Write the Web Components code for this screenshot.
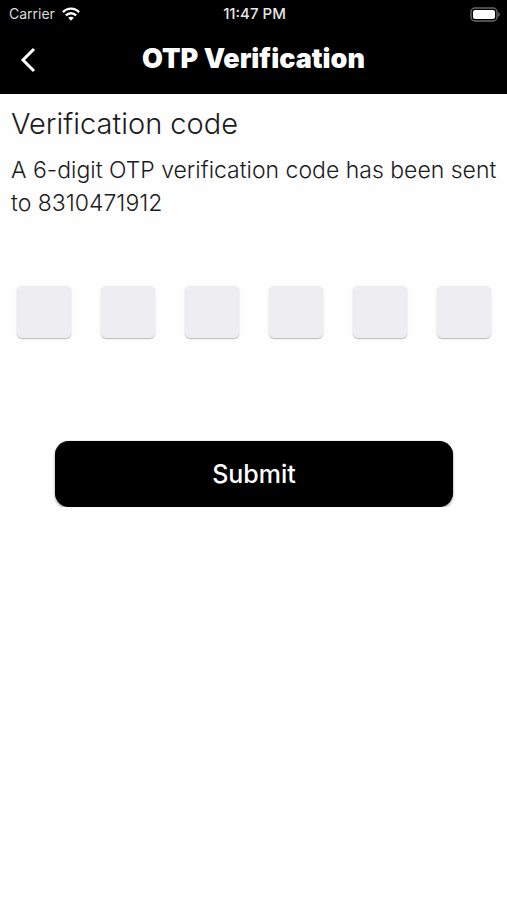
<!DOCTYPE html>
<html lang="en">
<head>
<meta charset="utf-8">
<meta name="viewport" content="width=device-width, initial-scale=1">
<title>OTP Verification</title>
<style>
  html, body { margin: 0; min-height: 100%; background: #fefefe; }
  body { font-family: Inter, "Open Sans", sans-serif; color: #1c1c1c; }
</style>
</head>
<body>
<otp-screen></otp-screen>
<script>
class StatusBar extends HTMLElement {
  constructor() {
    super();
    this.attachShadow({ mode: "open" }).innerHTML = `
      <style>
        :host { display: grid; grid-template-columns: 1fr auto 1fr; align-items: center;
          height: 28px; padding: 0 7px 0 9px; font-size: 14px; line-height: 20px; color: #dcdcdc; }
        .left { display: flex; align-items: center; gap: 7px; }
        .time { font-size: 15px; font-weight: 500; color: #e6e6e6; }
        .battery { justify-self: end; }
        svg { display: block; }
      </style>
      <div class="left"><span><slot name="carrier"></slot></span>
        <svg width="18" height="14" viewBox="0 0 18 14" fill="none" stroke="#fff" stroke-width="2.4" aria-hidden="true">
          <path d="M0.9 5.1C5.4 0.4 12.6 0.4 17.1 5.1"/>
          <path d="M3.9 8.4C6.8 5.5 11.2 5.5 14.1 8.4"/>
          <path d="M9 13.8L6.2 10.8C7.8 9.4 10.2 9.4 11.8 10.8Z" fill="#fff" stroke="none"/>
        </svg></div>
      <span class="time"><slot name="time"></slot></span>
      <svg class="battery" width="30" height="15" viewBox="0 0 30 15" aria-hidden="true">
        <rect x="1" y="1" width="26" height="13" rx="4" fill="#000" stroke="#686868" stroke-width="1.4"/>
        <rect x="3" y="3" width="22" height="9" rx="2" fill="#fff"/>
        <path d="M28.2 5.2C30.4 5.8 30.4 9.2 28.2 9.8Z" fill="#686868"/>
      </svg>`;
  }
}
class NavBar extends HTMLElement {
  constructor() {
    super();
    this.attachShadow({ mode: "open" }).innerHTML = `
      <style>
        :host { display: grid; grid-template-columns: 56px 1fr 56px; align-items: start; height: 66px; }
        button { display: grid; place-items: center; width: 56px; height: 48px; margin-top: 8px; padding: 0; border: 0; background: none; color: #fff; }
        h1 { margin: 0; padding-top: 11px; font-size: 27px; line-height: 40px; font-weight: 900; text-align: center; white-space: nowrap; color: #fff; }
        svg { display: block; }
      </style>
      <button type="button" aria-label="Back">
        <svg width="16" height="26" viewBox="0 0 16 26" fill="none" stroke="currentColor" stroke-width="3" aria-hidden="true"><path d="M14 2L3 13L14 24"/></svg>
      </button>
      <h1><slot></slot></h1>`;
  }
}
class OtpFields extends HTMLElement {
  constructor() {
    super();
    let fields = "";
    for (let i = 1; i <= 6; i++) {
      fields += `<input type="text" inputmode="numeric" maxlength="1" aria-label="Digit ${i}">`;
    }
    this.attachShadow({ mode: "open" }).innerHTML = `
      <style>
        :host { display: flex; justify-content: space-between; padding: 0 16px 0 17px; }
        input { box-sizing: border-box; width: 54px; height: 52px; padding: 0; border: 0; border-radius: 5px;
          background: #eeeef0; box-shadow: 0 1px 1px rgba(0,0,0,.22), 0 1px 3px rgba(0,0,0,.08);
          font: 500 23px Inter, sans-serif; text-align: center; color: #1c1c1c; }
      </style>${fields}`;
  }
}
class SubmitButton extends HTMLElement {
  constructor() {
    super();
    this.attachShadow({ mode: "open" }).innerHTML = `
      <style>
        :host { display: block; padding: 0 54px 0 55px; }
        button { display: block; width: 100%; height: 66px; padding: 0; border: 0; border-radius: 14px; background: #000; color: #fff;
          font: 500 25px/32px Inter, sans-serif; box-shadow: 0 0 1px rgba(0,0,0,.5), 0 2px 3px rgba(0,0,0,.3); }
      </style>
      <button type="button"><slot></slot></button>`;
  }
}
class OtpScreen extends HTMLElement {
  constructor() {
    super();
    this.attachShadow({ mode: "open" }).innerHTML = `
      <style>
        :host { display: block; }
        header { background: #000; }
        main { display: flex; flex-direction: column; }
        .intro { padding: 8px 8px 0 11px; }
        h2 { margin: 0; font-size: 29px; line-height: 44px; font-weight: 300; }
        p { margin: 8px 0 0; font-size: 23px; line-height: 33px; font-weight: 300; }
        otp-fields { margin-top: 66px; }
        submit-button { margin-top: 103px; }
      </style>
      <header>
        <status-bar><span slot="carrier">Carrier</span><span slot="time">11:47 PM</span></status-bar>
        <nav-bar>OTP Verification</nav-bar>
      </header>
      <main>
        <div class="intro">
          <h2>Verification code</h2>
          <p>A 6-digit OTP verification code has been sent to 8310471912</p>
        </div>
        <otp-fields></otp-fields>
        <submit-button>Submit</submit-button>
      </main>`;
  }
}
customElements.define("status-bar", StatusBar);
customElements.define("nav-bar", NavBar);
customElements.define("otp-fields", OtpFields);
customElements.define("submit-button", SubmitButton);
customElements.define("otp-screen", OtpScreen);
</script>
</body>
</html>
